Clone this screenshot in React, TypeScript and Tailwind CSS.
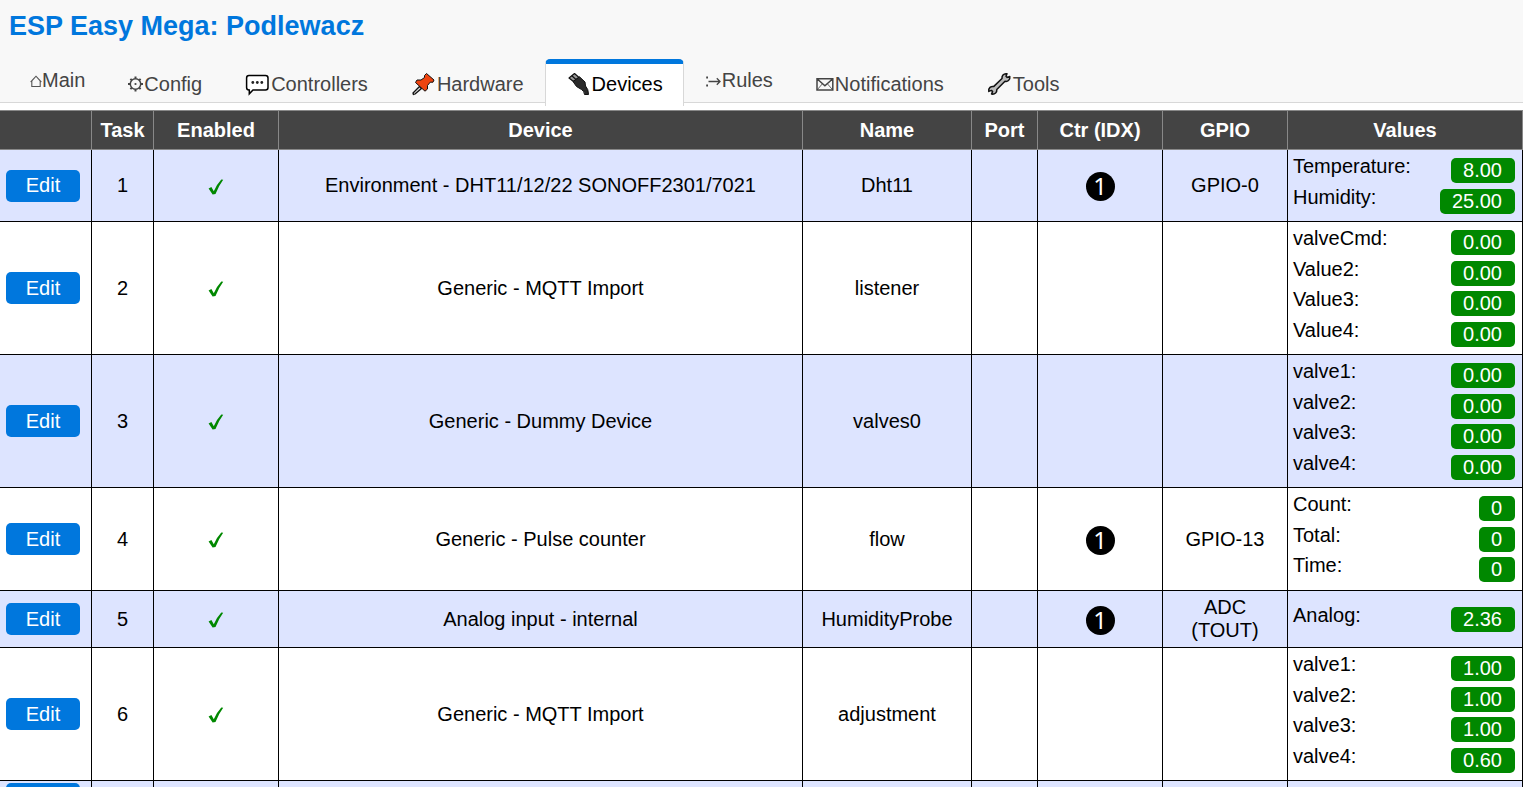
import React from "react";

type Row = {
  task?: number;
  device?: string;
  name?: string;
  ctr?: boolean;
  gpio?: string[];
  values: [string, string][];
};

const rows: Row[] = [
  { task: 1, device: "Environment - DHT11/12/22 SONOFF2301/7021", name: "Dht11", ctr: true, gpio: ["GPIO-0"], values: [["Temperature:", "8.00"], ["Humidity:", "25.00"]] },
  { task: 2, device: "Generic - MQTT Import", name: "listener", values: [["valveCmd:", "0.00"], ["Value2:", "0.00"], ["Value3:", "0.00"], ["Value4:", "0.00"]] },
  { task: 3, device: "Generic - Dummy Device", name: "valves0", values: [["valve1:", "0.00"], ["valve2:", "0.00"], ["valve3:", "0.00"], ["valve4:", "0.00"]] },
  { task: 4, device: "Generic - Pulse counter", name: "flow", ctr: true, gpio: ["GPIO-13"], values: [["Count:", "0"], ["Total:", "0"], ["Time:", "0"]] },
  { task: 5, device: "Analog input - internal", name: "HumidityProbe", ctr: true, gpio: ["ADC", "(TOUT)"], values: [["Analog:", "2.36"]] },
  { task: 6, device: "Generic - MQTT Import", name: "adjustment", values: [["valve1:", "1.00"], ["valve2:", "1.00"], ["valve3:", "1.00"], ["valve4:", "0.60"]] },
];

const listHeights = ["h-[31px]", "h-[31px]", "h-[61px]", "h-[92px]", "h-[122px]"];

const HomeIcon = () => (
  <svg className="h-6 w-3 shrink-0" viewBox="0 0 12 24" fill="none" stroke="#555" strokeWidth="1.1">
    <path d="M1.800 18.500V12.800L6 8.200l4.200 4.600V18.500ZM0.600 14 6 8.200l5.400 5.800" />
  </svg>
);

const GearIcon = () => (
  <svg className="h-6 w-[17px] shrink-0" viewBox="0 0 17 24" fill="none" stroke="#444">
    <circle cx="8.500" cy="12" r="5.200" strokeWidth="1.500" />
    <circle cx="8.500" cy="12" r="1.100" fill="#444" stroke="none" />
    <path strokeWidth="2" d="M8.500 6.500v-2M8.500 17.500v2M3 12H1M14 12h2M4.600 8.100 3.400 6.900M12.400 8.100l1.200-1.200M4.600 15.900l-1.200 1.200M12.400 15.900l1.200 1.200" />
  </svg>
);

const ChatIcon = () => (
  <svg className="h-6 w-[27px] shrink-0" viewBox="0 0 27 24">
    <path d="M5 3.500H21.500Q24 3.500 24 6V15.500Q24 18 21.500 18H9L5.300 21.800V18H5Q2.600 18 2.600 15.500V6Q2.600 3.500 5 3.500Z" fill="#fff" stroke="#000" strokeWidth="1.500" />
    <g fill="#222">
      <circle cx="8.800" cy="10.500" r="1.400" />
      <circle cx="13.300" cy="10.500" r="1.400" />
      <circle cx="17.800" cy="10.500" r="1.400" />
    </g>
  </svg>
);

const PinIcon = () => (
  <svg className="h-6 w-[27px] shrink-0" viewBox="0 0 27 24" stroke="#111" strokeLinejoin="round">
    <path d="M9.500 14.500 3 21 3.400 22.500 5 22 11.500 16.500Z" fill="#ddd" strokeWidth="1.300" />
    <path d="M14.500 3.500 16.500 1.500 24 8 23 10.200 20.200 10.200 17.500 13.500 17.500 17 15 19.200 5.500 10.500 7 8 11 8 14.500 5.500Z" fill="#ee4410" strokeWidth="1" />
  </svg>
);

const PlugIcon = () => (
  <svg className="h-6 w-[26px] shrink-0" viewBox="0 0 26 24" fill="#2a2a2a" stroke="#111" strokeLinejoin="round">
    <path d="M3 6 8.500 1.500 13 5.500 7.500 9.500Z" fill="#999" strokeWidth="1.200" />
    <path d="M5.800 3.800 10 7.500" strokeWidth="1.200" />
    <path d="M7 9.500 13.500 4.800 19 10 19.500 14Q22.500 17 22.500 22.500H18.500Q18.300 19 15.500 17.500L10.500 14.500Z" />
  </svg>
);

const RulesIcon = () => (
  <svg className="h-6 w-[17px] shrink-0" viewBox="0 0 17 24" fill="none" stroke="#444" strokeWidth="1.300">
    <path d="M3.500 13.500H15M11.800 10.300 15 13.500l-3.200 3.200" />
    <path d="M1.200 9.500h1.800M1.200 17.500h1.800" strokeWidth="1.800" />
  </svg>
);

const MailIcon = () => (
  <svg className="h-6 w-5 shrink-0" viewBox="0 0 20 24" fill="none" stroke="#444" strokeWidth="1.500">
    <path d="M2 6.800H17.800V18H2ZM2 6.800 9.900 13.800 17.800 6.800" />
    <path d="M2 18 7.200 12M17.800 18 12.600 12" strokeWidth="0.800" />
  </svg>
);

const WrenchIcon = () => (
  <svg className="h-6 w-[27px] shrink-0" viewBox="0 0 27 24">
    <path d="M17 3Q18.500 1.300 21 1.800L20 4.200 21.200 5.400 23.800 4.500Q24.300 7 22.500 8.500 21 9.800 19 9.200L10.800 17.600Q11 19.600 9.600 21 8 22.500 5.500 22L6.600 19.600 5.400 18.400 2.800 19.400Q2.300 17 4 15.400 5.600 14.200 7.600 14.600L16 6.500Q15.800 4.400 17 3Z" fill="#bbb" stroke="#111" strokeWidth="1.500" strokeLinejoin="round" />
  </svg>
);

const tabs = [
  { label: "Main", Icon: HomeIcon, raised: true },
  { label: "Config", Icon: GearIcon },
  { label: "Controllers", Icon: ChatIcon },
  { label: "Hardware", Icon: PinIcon },
  { label: "Devices", Icon: PlugIcon, active: true },
  { label: "Rules", Icon: RulesIcon, raised: true },
  { label: "Notifications", Icon: MailIcon },
  { label: "Tools", Icon: WrenchIcon },
];

const headings = ["", "Task", "Enabled", "Device", "Name", "Port", "Ctr (IDX)", "GPIO", "Values"];

const Check = () => (
  <svg className="mx-auto mt-0.5 h-4 w-4" viewBox="0 0 16 16" role="img" aria-label="enabled">
    <path d="M0.600 9.400 3.400 8 5.800 12.200Q9 5 13.300 0.500L15.200 0.800Q10.600 7 7.500 15L4.600 15.600Z" fill="#080" />
  </svg>
);

const ControllerBadge = () => (
  <span className="mx-auto mt-0.5 flex h-[29px] w-[29px] items-center justify-center rounded-full bg-black pb-0.5 font-['Noto_Sans',sans-serif] text-[24px] leading-[27px] text-white">1</span>
);

const editButton = "ml-px block h-8 w-[74px] rounded-[5px] bg-[#0077dd] text-white";

export default function App() {
  return (
    <div className="h-screen overflow-hidden bg-white font-['Liberation_Sans',Arial,sans-serif] text-[20px] leading-[23px] text-black">
      <header className="h-[103px] border-b border-[#d8d8d8] bg-[#f8f8f8]">
        <h1 className="px-[9px] pt-[10px] text-[27px] leading-8 font-bold text-[#0077dd]">ESP Easy Mega: Podlewacz</h1>
        <nav className="flex pt-[17px] pl-[9px]">
          {tabs.map(({ label, Icon, raised, active }) => (
            <a
              key={label}
              href="#"
              className={
                "flex h-[47px] items-center rounded-t-[5px] border-x border-t-[5px] px-5 " +
                (active ? "border-x-[#d8d8d8] border-t-[#0077dd] bg-white text-black " : "border-transparent text-[#444] ") +
                (raised ? "pb-2.5" : "pb-0.5")
              }
            >
              <Icon />
              {label}
            </a>
          ))}
        </nav>
      </header>

      <table className="mt-[7px] w-full table-fixed border-separate border-spacing-0 text-center">
        <colgroup>
          <col className="w-[91px]" />
          <col className="w-[62px]" />
          <col className="w-[125px]" />
          <col />
          <col className="w-[169px]" />
          <col className="w-[66px]" />
          <col className="w-[125px]" />
          <col className="w-[125px]" />
          <col className="w-[236px]" />
        </colgroup>
        <thead>
          <tr>
            {headings.map((h) => (
              <th key={h} className="h-10 border-y border-l border-[#888] bg-[#444] p-0 font-bold text-white first:border-l-0 last:border-r">
                {h}
              </th>
            ))}
          </tr>
        </thead>
        <tbody className="[&_td]:border-b [&_td]:border-l [&_td]:border-black [&_td]:p-[5px] [&_td:first-child]:border-l-0 [&_td:last-child]:border-r">
          {rows.map((r) => (
            <tr key={r.task} className="odd:bg-[#dde4ff]">
              <td>
                <button type="button" className={editButton}>Edit</button>
              </td>
              <td>{r.task}</td>
              <td><Check /></td>
              <td>{r.device}</td>
              <td>{r.name}</td>
              <td />
              <td>{r.ctr && <ControllerBadge />}</td>
              <td>{r.gpio?.map((g) => <div key={g}>{g}</div>)}</td>
              <td>
                <dl className={"grid auto-rows-fr " + listHeights[r.values.length]}>
                  {r.values.map(([label, value]) => (
                    <div key={label} className="flex items-start justify-between">
                      <dt>{label}</dt>
                      <dd className="mt-[3px] mr-0.5 h-[25px] rounded-[5px] bg-[#080] pr-[13px] pl-3 leading-[25px] text-white">{value}</dd>
                    </div>
                  ))}
                </dl>
              </td>
            </tr>
          ))}
          <tr className="odd:bg-[#dde4ff]">
            <td className="!pt-0.5">
              <button type="button" aria-label="Edit" className={editButton} />
            </td>
            {headings.slice(1).map((h) => <td key={h} />)}
          </tr>
        </tbody>
      </table>
    </div>
  );
}
